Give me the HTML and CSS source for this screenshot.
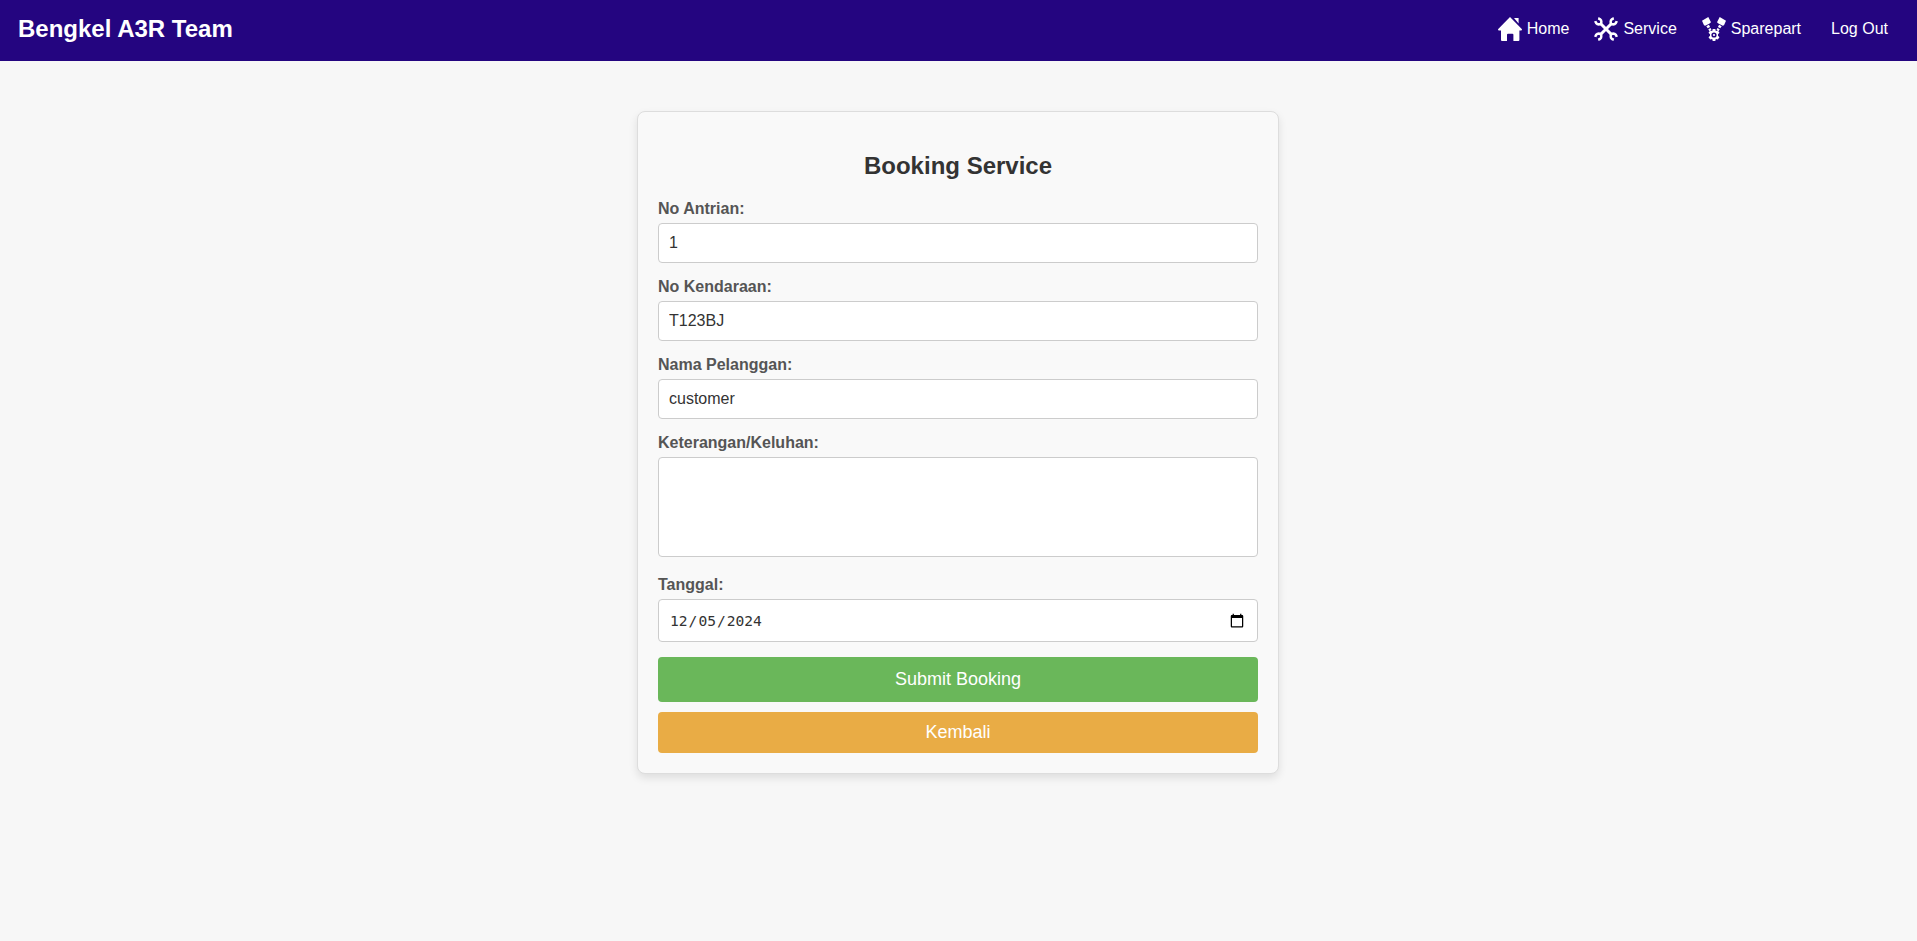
FILE: index.html
```html
<!DOCTYPE html>
<html lang="en-US">
<head>
<meta charset="utf-8">
<title>Booking Service</title>
<link rel="stylesheet" href="styles.css">
</head>
<body>
<header class="navbar">
  <div class="brand">Bengkel A3R Team</div>
  <nav class="links">
    <a class="link"><svg class="icon" viewBox="0 0 24 24"><path d="M12 0 24 12.2q0 1.200-1 1.200h-1.600V23q0 1-1 1h-5v-6.300q0-1-1-1H10q-1 0-1 1V24H4q-1 0-1-1v-9.600H1q-1 0-1-1.200zM16 1h4.600v5.600z"/></svg>Home</a>
    <a class="link"><svg class="icon" viewBox="0 0 24 24"><g class="wrench"><path d="M6 6 18 18M18 6 6 18"/><path class="jaw" d="M4.200 1.200Q8.600 2.600 6.900 6.900 2.600 8.600 1.200 4.200M19.800 1.200Q15.400 2.600 17.100 6.900 21.400 8.600 22.800 4.200M4.200 22.800Q8.600 21.400 6.900 17.100 2.600 15.400 1.200 19.800M19.800 22.800Q15.400 21.400 17.100 17.100 21.400 15.400 22.800 19.800"/></g></svg>Service</a>
    <a class="link"><svg class="icon" viewBox="0 0 24 24"><path d="M0 3.800 6.300 0 9 5.200 7.600 6.600 3.200 8.800 2 8.200zM24 3.800 17.700 0 15 5.200 16.400 6.600 20.800 8.800 22 8.200zM4.300 9.200l2.600-1.400 1.200 2.200-2.400 1.300zM6.300 12.300l2.300-1.300.8 1.700-2 1.500zM19.700 9.200l-2.600-1.400-1.200 2.200 2.400 1.300zM17.700 12.300l-2.300-1.300-.8 1.700 2 1.500z"/><path fill-rule="evenodd" d="M10.700 12h2.600l.5 2 2-.6 1.700 2.400-1.500 1.500v1.400l1.500 1.500-1.700 2.400-2-.6-.5 2h-2.600l-.5-2-2 .6-1.700-2.400 1.500-1.500v-1.400l-1.500-1.500 1.700-2.400 2 .6zM12 15.400a2.600 2.600 0 1 0 0 5.200 2.600 2.600 0 1 0 0-5.200z"/><circle cx="12" cy="18" r="1.100"/></svg>Sparepart</a>
    <a class="link">Log Out</a>
  </nav>
</header>
<main class="card">
  <h2 class="title">Booking Service</h2>
  <form>
    <label class="label" for="queue">No Antrian:</label>
    <input class="field" id="queue" type="text" value="1">
    <label class="label" for="plate">No Kendaraan:</label>
    <input class="field" id="plate" type="text" value="T123BJ">
    <label class="label" for="customer">Nama Pelanggan:</label>
    <input class="field" id="customer" type="text" value="customer">
    <label class="label" for="notes">Keterangan/Keluhan:</label>
    <textarea class="field notes" id="notes"></textarea>
    <label class="label" for="date">Tanggal:</label>
    <input class="field date" id="date" type="date" value="2024-12-05">
    <button class="button submit" type="button">Submit Booking</button>
    <button class="button back" type="button">Kembali</button>
  </form>
</main>
</body>
</html>
```
FILE: styles.css
```css
* { box-sizing: border-box; }
html { background: #f7f7f7; }
body {
  display: flow-root;
  min-height: 100vh;
  margin: 0;
  background: #f7f7f7;
  font-family: "Liberation Sans", Arial, sans-serif;
  color: #333;
}
.navbar {
  display: flex;
  justify-content: space-between;
  align-items: center;
  height: 61px;
  padding: 0 29px 4px 18px;
  background: #240580;
  color: #fff;
}
.brand { font-size: 24px; font-weight: bold; }
.links { display: flex; align-items: center; height: 24px; gap: 25px; }
.link { display: flex; align-items: center; gap: 5px; font-size: 16px; }
.link:last-child { margin-left: 5px; }
.icon { width: 24px; height: 24px; fill: #fff; }
.wrench { fill: none; stroke: #fff; stroke-width: 3; }
.jaw { stroke-width: 2.5; }
.card {
  width: 642px;
  height: 663px;
  margin: 50px 638px 0 637px;
  padding: 20px;
  background: #f9f9f9;
  border: 1px solid #ddd;
  border-radius: 8px;
  box-shadow: 0 4px 8px rgba(0, 0, 0, .1);
}
.title {
  margin: 20px 0 21px;
  font-size: 24px;
  line-height: 27px;
  text-align: center;
}
.label {
  display: block;
  margin-bottom: 5px;
  font-size: 16px;
  line-height: 18px;
  font-weight: bold;
  color: #555;
}
.field {
  display: block;
  width: 100%;
  height: 40px;
  margin: 0 0 15px;
  padding: 10px;
  border: 1px solid #ccc;
  border-radius: 4px;
  background: #fff;
  font: 16px "Liberation Sans", Arial, sans-serif;
  color: #333;
}
.notes { height: 100px; margin-bottom: 19px; resize: none; }
.date {
  height: 43px;
  font: 14.6px "DejaVu Sans Mono", monospace;
}
.date::-webkit-calendar-picker-indicator { font-size: 16px; }
.button {
  display: block;
  width: 100%;
  padding: 0;
  border: 0;
  border-radius: 4px;
  font: 18px "Liberation Sans", Arial, sans-serif;
  color: #fff;
}
.submit { height: 45px; background: #6ab75a; }
.back { height: 41px; margin-top: 10px; background: #e9ac45; }
```
